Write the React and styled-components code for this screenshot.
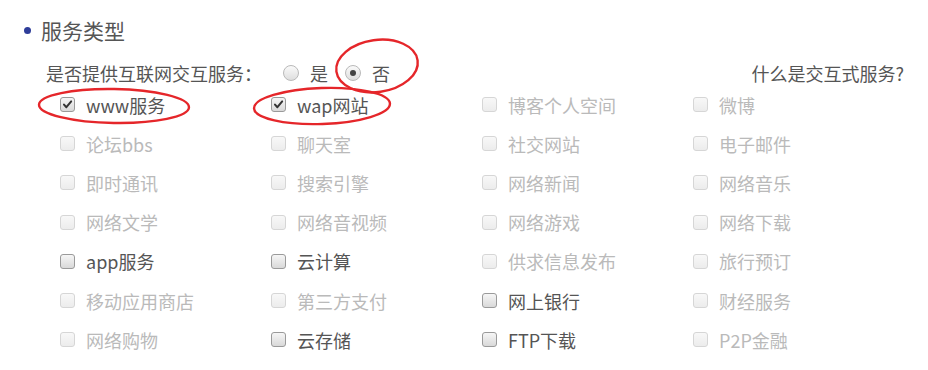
import React from 'react';
import styled, { createGlobalStyle } from 'styled-components';

const GlobalStyle = createGlobalStyle`
  html, body {
    margin: 0;
    padding: 0;
    background: #fff;
  }
  body {
    font-family: "Noto Sans CJK SC", "Noto Sans", sans-serif;
    color: #555;
  }
`;

const Page = styled.div`
  position: relative;
  width: 928px;
  height: 370px;
  padding: 16px 0 0 24px;
  box-sizing: border-box;
  overflow: hidden;
`;

const Section = styled.section`
  width: 881px;
`;

const Header = styled.div`
  display: flex;
  align-items: center;
  gap: 10px;
  height: 28px;
`;

const Bullet = styled.span`
  width: 7px;
  height: 7px;
  border-radius: 50%;
  background: #2e3d99;
`;

const Title = styled.h2`
  margin: 0;
  font-size: 21px;
  font-weight: 400;
  line-height: 28px;
  color: #555;
`;

const QuestionRow = styled.div`
  display: flex;
  align-items: center;
  justify-content: space-between;
  height: 24px;
  margin-top: 17px;
  padding-left: 22px;
  font-size: 18px;
  color: #555;
`;

const Question = styled.div`
  display: flex;
  align-items: center;
`;

const Options = styled.div`
  display: flex;
  align-items: center;
  gap: 17px;
  margin-left: 21px;
`;

const RadioLabel = styled.label`
  display: flex;
  align-items: center;
  gap: 11px;
`;

const Radio = styled.span`
  position: relative;
  width: 14px;
  height: 14px;
  border-radius: 50%;
  border: 1px solid #b9b9b9;
  background: linear-gradient(#fafafa, #dedede);

  &::after {
    content: '';
    display: ${p => (p.$checked ? 'block' : 'none')};
    position: absolute;
    left: 4px;
    top: 4px;
    width: 6px;
    height: 6px;
    border-radius: 50%;
    background: #444;
  }
`;

const HelpLink = styled.a`
  color: #555;
  text-decoration: none;
  font-size: 18px;
  margin-right: 1px;
`;

const Grid = styled.div`
  display: grid;
  grid-template-columns: repeat(4, 211px);
  grid-auto-rows: 39.2px;
  padding-left: 36px;
`;

const Item = styled.label`
  display: flex;
  align-items: center;
  gap: 11px;
  font-size: 18px;
  color: ${p => (p.$disabled ? '#bababa' : '#555')};
`;

const Box = styled.span`
  display: flex;
  align-items: center;
  justify-content: center;
  width: 13px;
  height: 13px;
  border-radius: 3px;
  border: 1px solid ${p => (p.$disabled ? '#d6d6d6' : '#9a9a9a')};
  background: ${p =>
    p.$disabled ? 'linear-gradient(#f8f8f8, #ececec)' : 'linear-gradient(#f6f6f6, #d9d9d9)'};
  flex-shrink: 0;
`;

const Overlay = styled.svg`
  position: absolute;
  left: 0;
  top: 0;
  pointer-events: none;
`;

const items = [
  ['www服务', 'checked'], ['wap网站', 'checked'], ['博客个人空间', 'off'], ['微博', 'off'],
  ['论坛bbs', 'off'], ['聊天室', 'off'], ['社交网站', 'off'], ['电子邮件', 'off'],
  ['即时通讯', 'off'], ['搜索引擎', 'off'], ['网络新闻', 'off'], ['网络音乐', 'off'],
  ['网络文学', 'off'], ['网络音视频', 'off'], ['网络游戏', 'off'], ['网络下载', 'off'],
  ['app服务', 'on'], ['云计算', 'on'], ['供求信息发布', 'off'], ['旅行预订', 'off'],
  ['移动应用商店', 'off'], ['第三方支付', 'off'], ['网上银行', 'on'], ['财经服务', 'off'],
  ['网络购物', 'off'], ['云存储', 'on'], ['FTP下载', 'on'], ['P2P金融', 'off'],
];

const Check = () => (
  <svg width="11" height="11" viewBox="0 0 11 11">
    <path d="M2 5.6 L4.4 8.2 L9.2 2.4" fill="none" stroke="#333" strokeWidth="2" strokeLinecap="round" strokeLinejoin="round" />
  </svg>
);

export default function App() {
  return (
    <>
      <GlobalStyle />
      <Page>
        <Section>
          <Header>
            <Bullet />
            <Title>服务类型</Title>
          </Header>
          <QuestionRow>
            <Question>
              是否提供互联网交互服务：
              <Options>
                <RadioLabel><Radio />是</RadioLabel>
                <RadioLabel><Radio $checked />否</RadioLabel>
              </Options>
            </Question>
            <HelpLink href="#">什么是交互式服务?</HelpLink>
          </QuestionRow>
          <Grid>
            {items.map(([name, state]) => (
              <Item key={name} $disabled={state === 'off'}>
                <Box $disabled={state === 'off'}>{state === 'checked' && <Check />}</Box>
                {name}
              </Item>
            ))}
          </Grid>
        </Section>
        <Overlay width="928" height="370">
          <g fill="none" stroke="#e5262a" strokeWidth="2.4">
            <ellipse cx="114" cy="106" rx="75" ry="17" transform="rotate(1 114 106)" />
            <ellipse cx="322" cy="106" rx="68" ry="18" transform="rotate(-2 322 106)" />
            <ellipse cx="377" cy="66" rx="41" ry="26" transform="rotate(-8 377 66)" />
          </g>
        </Overlay>
      </Page>
    </>
  );
}
